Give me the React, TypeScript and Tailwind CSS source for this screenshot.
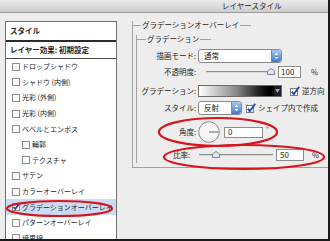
import React from 'react';

const Box = ({ checked = false }: { checked?: boolean }) => (
  <svg width="8" height="8" viewBox="0 0 8 8" className="shrink-0">
    <rect x="0.5" y="0.5" width="7" height="7" fill="#fbfbfb" stroke="#8d8d8d" />
    {checked && <path d="M1.5 4 L3.3 6 L7 1" fill="none" stroke="#1d3c9a" strokeWidth="1.6" />}
  </svg>
);

const BigCheck = () => (
  <svg width="10" height="10" viewBox="0 0 10 10" className="shrink-0">
    <rect x="0.5" y="2.5" width="7" height="7" fill="#fdfdfd" stroke="#7d7d7d" />
    <path d="M1.8 5.6 L3.8 8.2 L9.2 0.8" fill="none" stroke="#1f47b3" strokeWidth="1.8" />
  </svg>
);

const Stepper = () => (
  <div className="w-[10px] h-full rounded-r-[3px] bg-gradient-to-b from-[#a9c9f2] to-[#3a78d4] flex items-center justify-center border-l border-[#6b8fc4]">
    <svg width="5" height="8" viewBox="0 0 5 8">
      <path d="M0.5 3 L2.5 0.8 L4.5 3 Z" fill="#ffffff" />
      <path d="M0.5 5 L2.5 7.2 L4.5 5 Z" fill="#ffffff" />
    </svg>
  </div>
);

const Thumb = () => (
  <svg width="8" height="7" viewBox="0 0 8 7" className="absolute -top-[3px]">
    <path d="M0.5 6.5 L0.5 3 L4 0.5 L7.5 3 L7.5 6.5 Z" fill="#dfe6ef" stroke="#7b8594" />
  </svg>
);

const items: { label: string; indent?: boolean; checked?: boolean; selected?: boolean }[] = [
  { label: 'ドロップシャドウ' },
  { label: 'シャドウ (内側)' },
  { label: '光彩 (外側)' },
  { label: '光彩 (内側)' },
  { label: 'ベベルとエンボス' },
  { label: '輪郭', indent: true },
  { label: 'テクスチャ', indent: true },
  { label: 'サテン' },
  { label: 'カラーオーバーレイ' },
  { label: 'グラデーションオーバーレイ', checked: true, selected: true },
  { label: 'パターンオーバーレイ' },
  { label: '境界線' },
];

export default function App() {
  return (
    <div className="relative w-[330px] h-[241px] overflow-hidden bg-[#ededed] border-r-2 border-b-2 border-[#1b1b1b] font-['Noto_Sans_CJK_JP',sans-serif] text-[#1e1e1e]">
      {/* title bar */}
      <div className="h-[13px] bg-gradient-to-b from-[#ebebeb] to-[#cdcdcd] border-b border-[#9d9d9d] flex items-center">
        <span className="ml-[222px] text-[7.5px] leading-none text-[#222]">レイヤースタイル</span>
      </div>

      <div className="flex">
        {/* styles list */}
        <div className="ml-[5px] mt-[8px] w-[112px] h-[240px] shrink-0 bg-white border border-[#6f6f6f]">
          <div className="h-[20px] flex items-center pl-[4px] text-[7.5px] font-bold leading-none border-b-2 border-[#2a2a2a]">スタイル</div>
          <div className="h-[17px] flex items-center pl-[4px] text-[7.5px] font-bold leading-none border-b border-[#4a4a4a]">レイヤー効果: 初期設定</div>
          {items.map((it) => (
            <div
              key={it.label}
              className={`h-[15.6px] flex items-center gap-[2px] text-[7px] leading-none ${it.indent ? 'pl-[16px]' : 'pl-[6px]'} ${it.selected ? 'bg-[#cadcf4]' : ''}`}
            >
              <Box checked={it.checked} />
              <span>{it.label}</span>
            </div>
          ))}
        </div>

        {/* settings */}
        <div className="flex-1 min-w-0">
          <div className="ml-[15px] mt-[12px] h-[147px] border-l border-b border-[#a3a3a3]">
            <div className="-mt-[4px] -ml-px h-[8px] flex items-center">
              <div className="w-[9px] h-px bg-[#a3a3a3]" />
              <span className="px-[1px] text-[7.5px] leading-none">グラデーションオーバーレイ</span>
              <div className="w-[11px] h-px bg-[#a3a3a3]" />
            </div>
            <div className="ml-[3px] mt-[10px] h-[128px] border-l border-[#a3a3a3]">
              <div className="-mt-[4px] -ml-px h-[8px] flex items-center">
                <div className="w-[10px] h-px bg-[#a3a3a3]" />
                <span className="px-[1px] text-[7.5px] leading-none">グラデーション</span>
                <div className="w-[11px] h-px bg-[#a3a3a3]" />
              </div>

              <div className="mt-[5px] flex flex-col text-[7.5px] leading-none">
                {/* blend mode */}
                <div className="h-[15px] flex items-center">
                  <span className="w-[60px] text-right pr-[1px]">描画モード:</span>
                  <div className="ml-[1px] w-[84px] h-[14px] flex items-stretch bg-white border border-[#8a8a8a] rounded-[3px]">
                    <span className="flex-1 flex items-center pl-[5px]">通常</span>
                    <Stepper />
                  </div>
                </div>
                {/* opacity */}
                <div className="mt-[2px] h-[13px] flex items-center">
                  <span className="w-[60px] text-right pr-[1px]">不透明度:</span>
                  <div className="relative ml-[9px] w-[66px] h-[2px] bg-[#8c8c8c] border-b border-[#d8d8d8]">
                    <div className="absolute left-[61px]"><Thumb /></div>
                  </div>
                  <div className="ml-[6px] w-[23px] h-[12px] bg-white border border-[#8d8d8d] flex items-center pl-[2px] text-[8px]">100</div>
                  <span className="ml-[10px]">%</span>
                </div>
                {/* gradient */}
                <div className="mt-[6px] h-[13px] flex items-center">
                  <span className="w-[60px] text-right pr-[1px]">グラデーション:</span>
                  <div className="ml-[1px] w-[84px] h-[12px] flex border border-[#6d6d6d]">
                    <div className="flex-1 bg-gradient-to-r from-white via-[#8a8a8a] to-black" />
                    <div className="w-[7px] bg-[#1c1c1c] flex items-center justify-center">
                      <svg width="5" height="4" viewBox="0 0 5 4"><path d="M0 0 L5 0 L2.5 4 Z" fill="#7ea4dd" /></svg>
                    </div>
                  </div>
                  <div className="ml-[8px]"><BigCheck /></div>
                  <span className="ml-[2px]">逆方向</span>
                </div>
                {/* style */}
                <div className="mt-[3px] h-[15px] flex items-center">
                  <span className="w-[60px] text-right pr-[1px]">スタイル:</span>
                  <div className="ml-[1px] w-[44px] h-[14px] flex items-stretch bg-white border border-[#8a8a8a] rounded-[3px]">
                    <span className="flex-1 flex items-center pl-[5px]">反射</span>
                    <Stepper />
                  </div>
                  <div className="ml-[4px]"><BigCheck /></div>
                  <span className="ml-[2px]">シェイプ内で作成</span>
                </div>
                {/* angle */}
                <div className="mt-[6px] h-[22px] flex items-center">
                  <span className="w-[60px] text-right pr-[1px]">角度:</span>
                  <svg width="22" height="22" viewBox="0 0 22 22" className="ml-[1px] shrink-0">
                    <circle cx="11" cy="11" r="10.3" fill="#f7f7f7" stroke="#8a8a8a" />
                    <line x1="11" y1="11" x2="20.5" y2="11" stroke="#555" strokeWidth="0.9" />
                  </svg>
                  <div className="ml-[4px] w-[39px] h-[11px] bg-white border border-[#8d8d8d] flex items-center pl-[3px] text-[8px]">0</div>
                  <span className="ml-[3px] self-start mt-[5px] text-[7px]">°</span>
                </div>
                {/* scale */}
                <div className="mt-[5px] h-[13px] flex items-center">
                  <span className="w-[54px] text-right pr-[1px]">比率:</span>
                  <div className="relative ml-[8px] w-[74px] h-[2px] bg-[#8c8c8c] border-b border-[#d8d8d8]">
                    <div className="absolute left-[13px]"><Thumb /></div>
                  </div>
                  <div className="ml-[3px] w-[28px] h-[12px] bg-white border border-[#8d8d8d] flex items-center pl-[3px] text-[8px]">50</div>
                  <span className="ml-[8px]">%</span>
                </div>
              </div>
            </div>
          </div>
        </div>
      </div>

      {/* red annotation marks */}
      <svg className="absolute inset-0 pointer-events-none" width="330" height="241" viewBox="0 0 330 241">
        <ellipse cx="59.5" cy="208.5" rx="52.5" ry="7.5" fill="none" stroke="#d8141c" strokeWidth="2.2" />
        <ellipse cx="218" cy="132" rx="59" ry="14" fill="none" stroke="#d8141c" strokeWidth="2.2" />
        <ellipse cx="244" cy="157" rx="80" ry="12" fill="none" stroke="#d8141c" strokeWidth="2.2" />
      </svg>
    </div>
  );
}
